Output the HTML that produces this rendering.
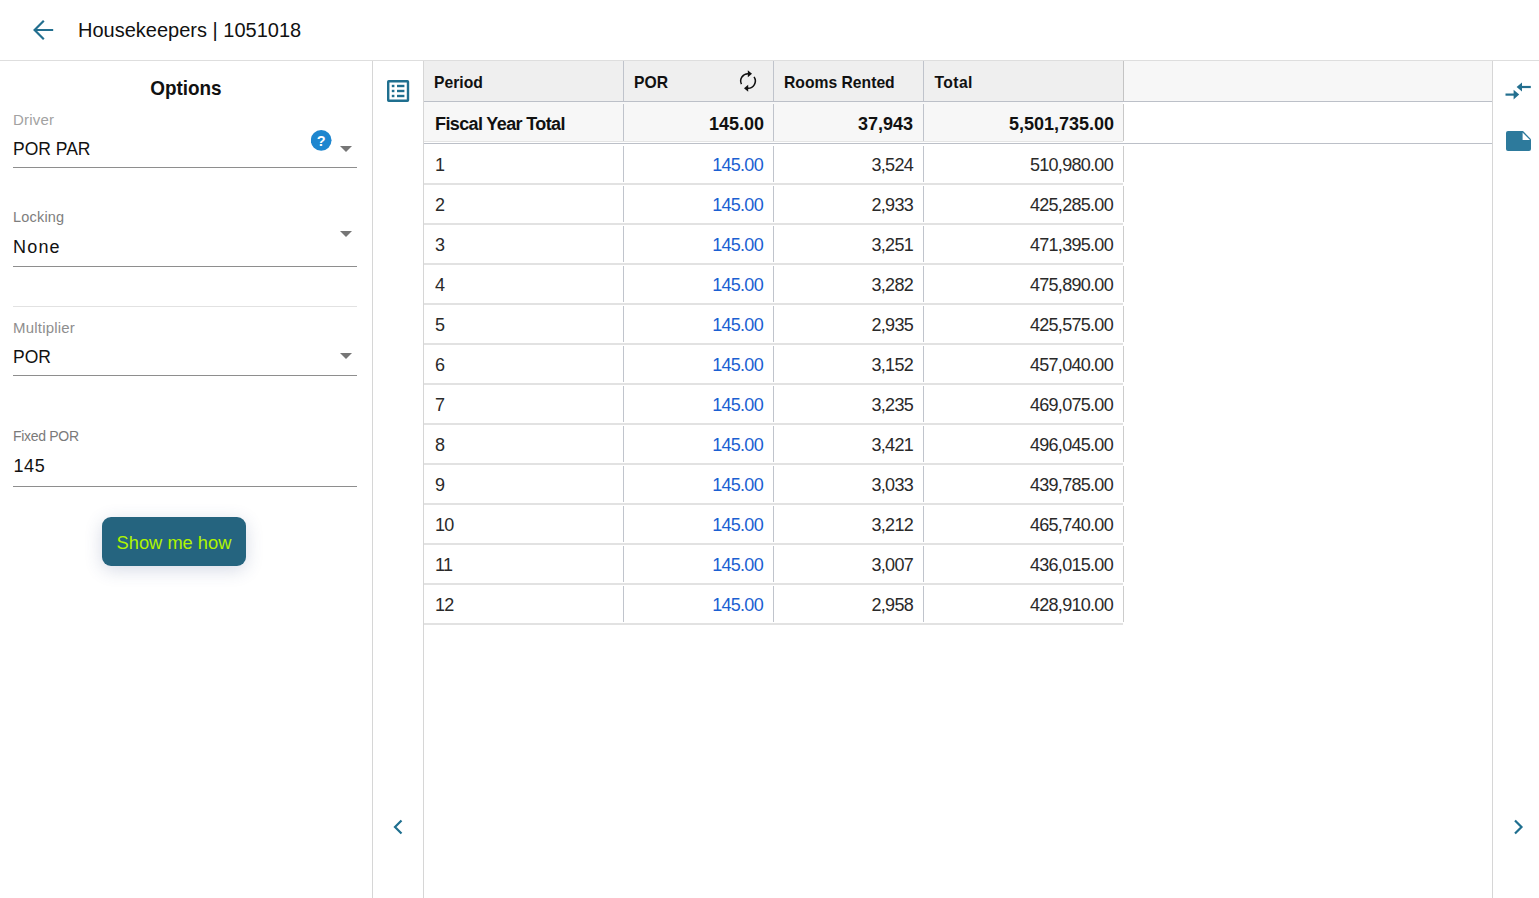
<!DOCTYPE html>
<html><head><meta charset="utf-8">
<style>
*{margin:0;padding:0;box-sizing:border-box}
html,body{width:1539px;height:898px;overflow:hidden;background:#fff;font-family:"Liberation Sans",sans-serif;color:#111}
.a{position:absolute;white-space:nowrap}
.hl{position:absolute;height:1px}
.vl{position:absolute;width:1px}
.lbl{font-size:15px;line-height:15px;color:#9c9c9c;letter-spacing:0.2px}
.val{font-size:17.5px;line-height:17.5px;color:#111}
.ul{position:absolute;left:13px;width:344px;height:1px;background:#8e8e8e}
.tri{position:absolute;width:0;height:0;border-left:6px solid transparent;border-right:6px solid transparent;border-top:6px solid #767676}
.th{font-size:15.7px;line-height:15.7px;font-weight:bold;color:#111}
.fy{font-size:18px;line-height:18px;font-weight:bold;color:#111}
.td{font-size:18px;line-height:18px;color:#2a2a2a;letter-spacing:-0.7px}
.r{text-align:right}
.blue{color:#1a5fd2}
</style></head><body>

<!-- top bar -->
<svg class="a" style="left:30px;top:17px" width="26" height="26" viewBox="30 17 26 26">
  <path d="M53.2 30 H35.2 M43.8 20.8 L34.6 30 L43.8 39.2" fill="none" stroke="#236f8f" stroke-width="2.2"/>
</svg>
<div class="a" style="left:78px;top:19.8px;font-size:20px;line-height:20px;color:#111">Housekeepers | 1051018</div>
<div class="hl" style="left:0;top:60px;width:1539px;background:#dedede"></div>

<!-- left panel -->
<div class="vl" style="left:372px;top:61px;height:837px;background:#d6d6d6"></div>
<div class="a" style="left:0;width:372px;text-align:center;top:77.4px;font-size:21px;line-height:21px;font-weight:bold;color:#111;transform:scaleX(0.9);transform-origin:185px 0">Options</div>

<div class="a lbl" style="left:13px;top:112.1px;color:#a2a2a2">Driver</div>
<div class="a val" style="left:13px;top:141.2px">POR PAR</div>
<svg class="a" style="left:311px;top:130px" width="21" height="21" viewBox="0 0 21 21">
  <circle cx="10.2" cy="10.35" r="10.35" fill="#1e86cf"/>
  <text x="10.3" y="15.6" text-anchor="middle" font-family="Liberation Sans" font-weight="bold" font-size="14.5" fill="#fff">?</text>
</svg>
<div class="tri" style="left:340px;top:146px"></div>
<div class="ul" style="top:167px"></div>

<div class="a lbl" style="left:13px;top:210px;font-size:14.5px;color:#7e7e7e">Locking</div>
<div class="a val" style="left:13px;top:238.6px;font-size:18px;letter-spacing:1.2px">None</div>
<div class="tri" style="left:340px;top:231px"></div>
<div class="ul" style="top:266px"></div>
<div class="hl" style="left:13px;top:306px;width:344px;background:#e2e2e2"></div>

<div class="a lbl" style="left:13px;top:319.6px;color:#8e8e8e">Multiplier</div>
<div class="a val" style="left:13px;top:349px">POR</div>
<div class="tri" style="left:340px;top:353px"></div>
<div class="ul" style="top:375px"></div>

<div class="a lbl" style="left:13px;top:429.2px;font-size:14px;letter-spacing:-0.3px;color:#7a7a7a">Fixed POR</div>
<div class="a val" style="left:13.5px;top:457.6px;font-size:18px;letter-spacing:0.6px">145</div>
<div class="ul" style="top:486px"></div>

<div class="a" style="left:102px;top:517px;width:144px;height:49px;border-radius:9px;background:#25647f;box-shadow:0 4px 18px rgba(50,70,130,.2)"></div>
<div class="a" style="left:102px;top:533.5px;width:144px;text-align:center;font-size:18.3px;line-height:18.3px;color:#b0f500">Show me how</div>

<!-- icon column -->
<div class="vl" style="left:423px;top:61px;height:837px;background:#d6d6d6"></div>
<svg class="a" style="left:385px;top:78px" width="26" height="26" viewBox="385 78 26 26">
  <rect x="388.2" y="81.2" width="19.8" height="19.6" rx="0.5" fill="none" stroke="#1f6f8f" stroke-width="2.4"/>
  <rect x="391.8" y="84.8" width="2.6" height="2.4" fill="#1f6f8f"/>
  <rect x="391.8" y="89.8" width="2.6" height="2.4" fill="#1f6f8f"/>
  <rect x="391.8" y="94.8" width="2.6" height="2.4" fill="#1f6f8f"/>
  <rect x="397" y="84.8" width="7.4" height="2.4" fill="#1f6f8f"/>
  <rect x="397" y="89.8" width="7.4" height="2.4" fill="#1f6f8f"/>
  <rect x="397" y="94.8" width="7.4" height="2.4" fill="#1f6f8f"/>
</svg>
<svg class="a" style="left:388px;top:815px" width="20" height="24" viewBox="388 815 20 24">
  <path d="M401.5 820.5 L395 827 L401.5 833.5" fill="none" stroke="#1f6f8f" stroke-width="2.2"/>
</svg>

<!-- table header -->
<div class="a" style="left:424px;top:61px;width:699px;height:40px;background:#efefef"></div>
<div class="a" style="left:1124px;top:61px;width:368px;height:40px;background:#f7f7f7"></div>
<div class="hl" style="left:424px;top:101px;width:1068px;background:#bcc0c8"></div>
<div class="vl" style="left:623px;top:61px;height:40px;background:#bfc3cb"></div>
<div class="vl" style="left:773px;top:61px;height:40px;background:#bfc3cb"></div>
<div class="vl" style="left:923px;top:61px;height:40px;background:#bfc3cb"></div>
<div class="vl" style="left:1123px;top:61px;height:40px;background:#c4c4c4"></div>
<div class="a th" style="left:434px;top:74.8px">Period</div>
<div class="a th" style="left:634px;top:74.8px">POR</div>
<div class="a th" style="left:784px;top:74.8px">Rooms Rented</div>
<div class="a th" style="left:934.5px;top:74.8px;letter-spacing:0.4px">Total</div>
<svg class="a" style="left:737px;top:68px" width="22" height="26" viewBox="737 68 22 26">
  <path d="M741.44 84.2 A7.3 7.3 0 0 1 748.3 73.7" fill="none" stroke="#111" stroke-width="1.5"/>
  <path d="M754.05 76.92 A7.3 7.3 0 0 1 747.7 88.3" fill="none" stroke="#111" stroke-width="1.5"/>
  <path d="M747.8 70.2 L752 73.7 L747.8 77.2 Z" fill="#111"/>
  <path d="M748.2 84.8 L744 88.3 L748.2 91.8 Z" fill="#111"/>
</svg>
<!-- fiscal year total -->
<div class="a" style="left:424px;top:102px;width:699px;height:39px;background:#f7f7f7"></div>
<div class="hl" style="left:424px;top:141px;width:699px;background:#e4e4e4"></div>
<div class="hl" style="left:424px;top:143px;width:1068px;background:#bcc0c8"></div>
<div class="vl" style="left:623px;top:104px;height:37px;background:#bfc3cb"></div>
<div class="vl" style="left:773px;top:104px;height:37px;background:#bfc3cb"></div>
<div class="vl" style="left:923px;top:104px;height:37px;background:#bfc3cb"></div>
<div class="vl" style="left:1123px;top:104px;height:37px;background:#c8c8c8"></div>
<div class="a fy" style="left:435px;top:114.5px;letter-spacing:-0.62px">Fiscal Year Total</div>
<div class="a fy r" style="left:624px;width:140px;top:114.5px">145.00</div>
<div class="a fy r" style="left:773px;width:140px;top:114.5px">37,943</div>
<div class="a fy r" style="left:924px;width:190px;top:114.5px">5,501,735.00</div>
<!-- rows -->
<div class="a" style="left:424px;top:183px;width:699px;height:2px;background:#e2e2e2"></div>
<div class="vl" style="left:623px;top:146px;height:36px;background:#c0c4cc"></div>
<div class="vl" style="left:773px;top:146px;height:36px;background:#c0c4cc"></div>
<div class="vl" style="left:923px;top:146px;height:36px;background:#c0c4cc"></div>
<div class="vl" style="left:1123px;top:146px;height:36px;background:#cccccc"></div>
<div class="a td" style="left:435px;top:156.0px">1</div>
<div class="a td r blue" style="left:623px;width:140px;top:156.0px">145.00</div>
<div class="a td r" style="left:773px;width:140px;top:156.0px">3,524</div>
<div class="a td r" style="left:923px;width:190px;top:156.0px">510,980.00</div>
<div class="a" style="left:424px;top:223px;width:699px;height:2px;background:#e2e2e2"></div>
<div class="vl" style="left:623px;top:186px;height:36px;background:#c0c4cc"></div>
<div class="vl" style="left:773px;top:186px;height:36px;background:#c0c4cc"></div>
<div class="vl" style="left:923px;top:186px;height:36px;background:#c0c4cc"></div>
<div class="vl" style="left:1123px;top:186px;height:36px;background:#cccccc"></div>
<div class="a td" style="left:435px;top:196.0px">2</div>
<div class="a td r blue" style="left:623px;width:140px;top:196.0px">145.00</div>
<div class="a td r" style="left:773px;width:140px;top:196.0px">2,933</div>
<div class="a td r" style="left:923px;width:190px;top:196.0px">425,285.00</div>
<div class="a" style="left:424px;top:263px;width:699px;height:2px;background:#e2e2e2"></div>
<div class="vl" style="left:623px;top:226px;height:36px;background:#c0c4cc"></div>
<div class="vl" style="left:773px;top:226px;height:36px;background:#c0c4cc"></div>
<div class="vl" style="left:923px;top:226px;height:36px;background:#c0c4cc"></div>
<div class="vl" style="left:1123px;top:226px;height:36px;background:#cccccc"></div>
<div class="a td" style="left:435px;top:236.0px">3</div>
<div class="a td r blue" style="left:623px;width:140px;top:236.0px">145.00</div>
<div class="a td r" style="left:773px;width:140px;top:236.0px">3,251</div>
<div class="a td r" style="left:923px;width:190px;top:236.0px">471,395.00</div>
<div class="a" style="left:424px;top:303px;width:699px;height:2px;background:#e2e2e2"></div>
<div class="vl" style="left:623px;top:266px;height:36px;background:#c0c4cc"></div>
<div class="vl" style="left:773px;top:266px;height:36px;background:#c0c4cc"></div>
<div class="vl" style="left:923px;top:266px;height:36px;background:#c0c4cc"></div>
<div class="vl" style="left:1123px;top:266px;height:36px;background:#cccccc"></div>
<div class="a td" style="left:435px;top:276.0px">4</div>
<div class="a td r blue" style="left:623px;width:140px;top:276.0px">145.00</div>
<div class="a td r" style="left:773px;width:140px;top:276.0px">3,282</div>
<div class="a td r" style="left:923px;width:190px;top:276.0px">475,890.00</div>
<div class="a" style="left:424px;top:343px;width:699px;height:2px;background:#e2e2e2"></div>
<div class="vl" style="left:623px;top:306px;height:36px;background:#c0c4cc"></div>
<div class="vl" style="left:773px;top:306px;height:36px;background:#c0c4cc"></div>
<div class="vl" style="left:923px;top:306px;height:36px;background:#c0c4cc"></div>
<div class="vl" style="left:1123px;top:306px;height:36px;background:#cccccc"></div>
<div class="a td" style="left:435px;top:316.0px">5</div>
<div class="a td r blue" style="left:623px;width:140px;top:316.0px">145.00</div>
<div class="a td r" style="left:773px;width:140px;top:316.0px">2,935</div>
<div class="a td r" style="left:923px;width:190px;top:316.0px">425,575.00</div>
<div class="a" style="left:424px;top:383px;width:699px;height:2px;background:#e2e2e2"></div>
<div class="vl" style="left:623px;top:346px;height:36px;background:#c0c4cc"></div>
<div class="vl" style="left:773px;top:346px;height:36px;background:#c0c4cc"></div>
<div class="vl" style="left:923px;top:346px;height:36px;background:#c0c4cc"></div>
<div class="vl" style="left:1123px;top:346px;height:36px;background:#cccccc"></div>
<div class="a td" style="left:435px;top:356.0px">6</div>
<div class="a td r blue" style="left:623px;width:140px;top:356.0px">145.00</div>
<div class="a td r" style="left:773px;width:140px;top:356.0px">3,152</div>
<div class="a td r" style="left:923px;width:190px;top:356.0px">457,040.00</div>
<div class="a" style="left:424px;top:423px;width:699px;height:2px;background:#e2e2e2"></div>
<div class="vl" style="left:623px;top:386px;height:36px;background:#c0c4cc"></div>
<div class="vl" style="left:773px;top:386px;height:36px;background:#c0c4cc"></div>
<div class="vl" style="left:923px;top:386px;height:36px;background:#c0c4cc"></div>
<div class="vl" style="left:1123px;top:386px;height:36px;background:#cccccc"></div>
<div class="a td" style="left:435px;top:396.0px">7</div>
<div class="a td r blue" style="left:623px;width:140px;top:396.0px">145.00</div>
<div class="a td r" style="left:773px;width:140px;top:396.0px">3,235</div>
<div class="a td r" style="left:923px;width:190px;top:396.0px">469,075.00</div>
<div class="a" style="left:424px;top:463px;width:699px;height:2px;background:#e2e2e2"></div>
<div class="vl" style="left:623px;top:426px;height:36px;background:#c0c4cc"></div>
<div class="vl" style="left:773px;top:426px;height:36px;background:#c0c4cc"></div>
<div class="vl" style="left:923px;top:426px;height:36px;background:#c0c4cc"></div>
<div class="vl" style="left:1123px;top:426px;height:36px;background:#cccccc"></div>
<div class="a td" style="left:435px;top:436.0px">8</div>
<div class="a td r blue" style="left:623px;width:140px;top:436.0px">145.00</div>
<div class="a td r" style="left:773px;width:140px;top:436.0px">3,421</div>
<div class="a td r" style="left:923px;width:190px;top:436.0px">496,045.00</div>
<div class="a" style="left:424px;top:503px;width:699px;height:2px;background:#e2e2e2"></div>
<div class="vl" style="left:623px;top:466px;height:36px;background:#c0c4cc"></div>
<div class="vl" style="left:773px;top:466px;height:36px;background:#c0c4cc"></div>
<div class="vl" style="left:923px;top:466px;height:36px;background:#c0c4cc"></div>
<div class="vl" style="left:1123px;top:466px;height:36px;background:#cccccc"></div>
<div class="a td" style="left:435px;top:476.0px">9</div>
<div class="a td r blue" style="left:623px;width:140px;top:476.0px">145.00</div>
<div class="a td r" style="left:773px;width:140px;top:476.0px">3,033</div>
<div class="a td r" style="left:923px;width:190px;top:476.0px">439,785.00</div>
<div class="a" style="left:424px;top:543px;width:699px;height:2px;background:#e2e2e2"></div>
<div class="vl" style="left:623px;top:506px;height:36px;background:#c0c4cc"></div>
<div class="vl" style="left:773px;top:506px;height:36px;background:#c0c4cc"></div>
<div class="vl" style="left:923px;top:506px;height:36px;background:#c0c4cc"></div>
<div class="vl" style="left:1123px;top:506px;height:36px;background:#cccccc"></div>
<div class="a td" style="left:435px;top:516.0px">10</div>
<div class="a td r blue" style="left:623px;width:140px;top:516.0px">145.00</div>
<div class="a td r" style="left:773px;width:140px;top:516.0px">3,212</div>
<div class="a td r" style="left:923px;width:190px;top:516.0px">465,740.00</div>
<div class="a" style="left:424px;top:583px;width:699px;height:2px;background:#e2e2e2"></div>
<div class="vl" style="left:623px;top:546px;height:36px;background:#c0c4cc"></div>
<div class="vl" style="left:773px;top:546px;height:36px;background:#c0c4cc"></div>
<div class="vl" style="left:923px;top:546px;height:36px;background:#c0c4cc"></div>
<div class="vl" style="left:1123px;top:546px;height:36px;background:#cccccc"></div>
<div class="a td" style="left:435px;top:556.0px">11</div>
<div class="a td r blue" style="left:623px;width:140px;top:556.0px">145.00</div>
<div class="a td r" style="left:773px;width:140px;top:556.0px">3,007</div>
<div class="a td r" style="left:923px;width:190px;top:556.0px">436,015.00</div>
<div class="a" style="left:424px;top:623px;width:699px;height:2px;background:#e2e2e2"></div>
<div class="vl" style="left:623px;top:586px;height:36px;background:#c0c4cc"></div>
<div class="vl" style="left:773px;top:586px;height:36px;background:#c0c4cc"></div>
<div class="vl" style="left:923px;top:586px;height:36px;background:#c0c4cc"></div>
<div class="vl" style="left:1123px;top:586px;height:36px;background:#cccccc"></div>
<div class="a td" style="left:435px;top:596.0px">12</div>
<div class="a td r blue" style="left:623px;width:140px;top:596.0px">145.00</div>
<div class="a td r" style="left:773px;width:140px;top:596.0px">2,958</div>
<div class="a td r" style="left:923px;width:190px;top:596.0px">428,910.00</div>

<!-- right column -->
<div class="vl" style="left:1492px;top:61px;height:837px;background:#d6d6d6"></div>
<svg class="a" style="left:1500px;top:78px" width="36" height="26" viewBox="1500 78 36 26">
  <path d="M1505.5 94.6 H1514.5" stroke="#236f8f" stroke-width="2.2"/>
  <path d="M1513.6 89.8 L1519.2 94.6 L1513.6 99.6 Z" fill="#236f8f"/>
  <path d="M1521 87 H1530.8" stroke="#236f8f" stroke-width="2.2"/>
  <path d="M1522 82.4 L1516.6 87 L1522 91.6 Z" fill="#236f8f"/>
</svg>
<svg class="a" style="left:1504px;top:129px" width="30" height="24" viewBox="1504 129 30 24">
  <path d="M1508 131 H1523 L1531 139.2 V149 Q1531 151 1529 151 H1508 Q1506 151 1506 149 V133 Q1506 131 1508 131 Z" fill="#2d7a9c"/>
  <path d="M1522.6 132.6 V140 H1530 Z" fill="#fff"/>
</svg>
<svg class="a" style="left:1508px;top:815px" width="20" height="24" viewBox="1508 815 20 24">
  <path d="M1515 820.5 L1521.5 827 L1515 833.5" fill="none" stroke="#1f6f8f" stroke-width="2.2"/>
</svg>

</body></html>
